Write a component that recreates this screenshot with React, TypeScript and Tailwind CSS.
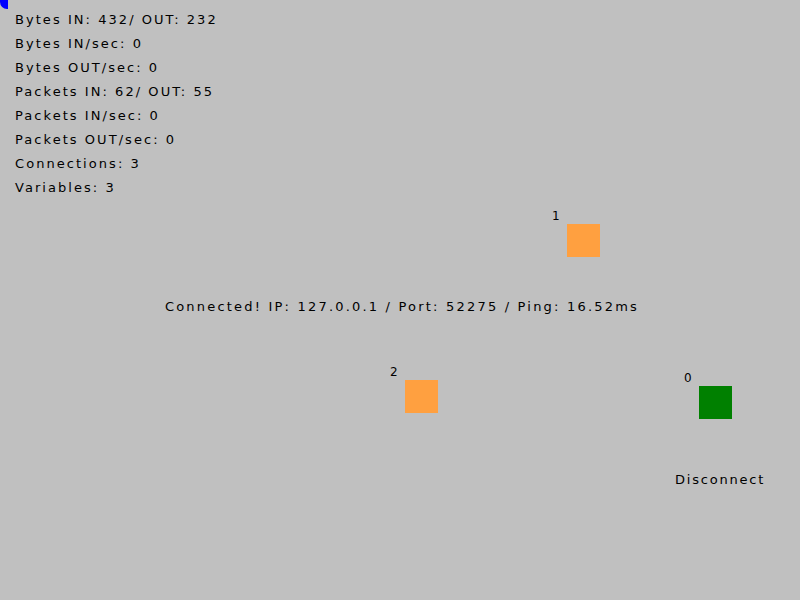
import React from "react";

const stats = [
  "Bytes IN: 432/ OUT: 232",
  "Bytes IN/sec: 0",
  "Bytes OUT/sec: 0",
  "Packets IN: 62/ OUT: 55",
  "Packets IN/sec: 0",
  "Packets OUT/sec: 0",
  "Connections: 3",
  "Variables: 3",
];

type Node = { id: string; x: number; y: number; color: string };

// entity positions on the scene
const nodes: Node[] = [
  { id: "1", x: 567, y: 224, color: "bg-[#ffa040]" },
  { id: "2", x: 405, y: 380, color: "bg-[#ffa040]" },
  { id: "0", x: 699, y: 386, color: "bg-[#008000]" },
];

const Entity = ({ node }: { node: Node }) => (
  <div className="absolute flex items-start" style={{ left: node.x - 15, top: node.y - 15 }}>
    <span className="text-[12px] leading-none w-[15px] pt-[1px]">{node.id}</span>
    <div className={`w-[33px] h-[33px] mt-[15px] ${node.color}`} />
  </div>
);

export default function App() {
  return (
    <div
      className="relative w-[800px] h-[600px] bg-[#c0c0c0] overflow-hidden text-black"
      style={{ fontFamily: '"DejaVu Sans", sans-serif' }}
    >
      <div className="absolute left-0 top-0 w-[8px] h-[9px] bg-[#0000ff] rounded-bl-[7px]" />

      {/* network stats */}
      <div className="flex flex-col pl-[15px] pt-[8px]">
        {stats.map((s) => (
          <div key={s} className="text-[13px] leading-[24px] tracking-[2.05px] h-[24px]">
            {s}
          </div>
        ))}
      </div>

      {nodes.map((n) => (
        <Entity key={n.id} node={n} />
      ))}

      <div className="absolute left-0 right-0 top-[300px] flex justify-center">
        <span className="text-[13px] leading-none tracking-[2.2px] pl-[4px]">
          Connected! IP: 127.0.0.1 / Port: 52275 / Ping: 16.52ms
        </span>
      </div>

      <button className="absolute left-[675px] top-[473px] text-[13px] leading-none tracking-[1.8px]">
        Disconnect
      </button>
    </div>
  );
}
